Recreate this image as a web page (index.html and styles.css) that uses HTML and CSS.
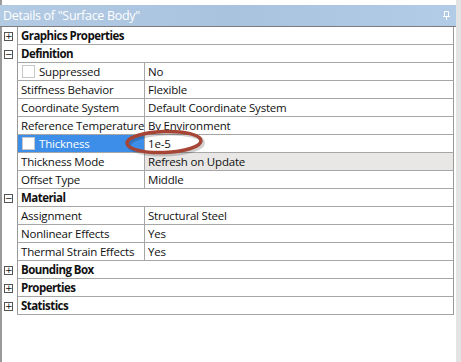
FILE: index.html
```html
<!DOCTYPE html>
<html lang="en">
<head>
  <meta charset="UTF-8">
  <title>Details of "Surface Body"</title>
  <link rel="stylesheet" href="styles.css">
</head>
<body>
<div class="panel">
  <!-- Title Bar -->
  <div class="title-bar">
    <span>Details of "Surface Body"</span>
    <svg class="pin" width="7" height="9" viewBox="0 0 7 9">
      <path d="M1.5 0.5h4v5h-4z M0 5.5h7 M3.5 5.5v3.5" fill="none" stroke="#fff" stroke-width="1"/>
    </svg>
  </div>

  <!-- Details Grid -->
  <div class="grid">
    <div class="row group"><div class="gutter"><span class="toggle">+</span></div><div class="cells">Graphics Properties</div></div>
    <div class="row group"><div class="gutter"><span class="toggle">&minus;</span></div><div class="cells">Definition</div></div>
    <div class="row"><div class="gutter"></div><div class="cells"><div class="name"><span class="check"></span>Suppressed</div><div class="value">No</div></div></div>
    <div class="row"><div class="gutter"></div><div class="cells"><div class="name">Stiffness Behavior</div><div class="value">Flexible</div></div></div>
    <div class="row"><div class="gutter"></div><div class="cells"><div class="name">Coordinate System</div><div class="value">Default Coordinate System</div></div></div>
    <div class="row"><div class="gutter"></div><div class="cells"><div class="name">Reference Temperature</div><div class="value">By Environment</div></div></div>
    <div class="row"><div class="gutter"></div><div class="cells"><div class="name selected"><span class="check"></span>Thickness</div><div class="value">1e-5</div></div></div>
    <div class="row"><div class="gutter"></div><div class="cells"><div class="name">Thickness Mode</div><div class="value readonly">Refresh on Update</div></div></div>
    <div class="row"><div class="gutter"></div><div class="cells"><div class="name">Offset Type</div><div class="value">Middle</div></div></div>
    <div class="row group"><div class="gutter"><span class="toggle">&minus;</span></div><div class="cells">Material</div></div>
    <div class="row"><div class="gutter"></div><div class="cells"><div class="name">Assignment</div><div class="value">Structural Steel</div></div></div>
    <div class="row"><div class="gutter"></div><div class="cells"><div class="name">Nonlinear Effects</div><div class="value">Yes</div></div></div>
    <div class="row"><div class="gutter"></div><div class="cells"><div class="name">Thermal Strain Effects</div><div class="value">Yes</div></div></div>
    <div class="row group"><div class="gutter"><span class="toggle">+</span></div><div class="cells">Bounding Box</div></div>
    <div class="row group"><div class="gutter"><span class="toggle">+</span></div><div class="cells">Properties</div></div>
    <div class="row group"><div class="gutter"><span class="toggle">+</span></div><div class="cells">Statistics</div></div>
  </div>

  <!-- Annotation -->
  <svg class="callout" width="90" height="34" viewBox="0 0 90 34">
    <ellipse cx="45" cy="17" rx="37" ry="10.5" fill="none" stroke="rgba(0,0,0,0.18)" stroke-width="4" transform="translate(2 2) rotate(-2 45 17)"/>
    <ellipse cx="45" cy="17" rx="37" ry="10.5" fill="none" stroke="#a64535" stroke-width="3.5" transform="rotate(-2 45 17)"/>
  </svg>
</div>
</body>
</html>
```

FILE: styles.css
```css
body {
  margin: 0;
  background-color: #fff;
  font-family: "Open Sans", "Noto Sans", sans-serif;
  font-size: 11.5px;
  letter-spacing: -0.2px;
  color: #111;
}

.panel {
  position: relative;
  height: 362px;
  padding-top: 5px;
  box-sizing: border-box;
  border-right: 5px solid #e4e4e4;
  border-left: 2px solid #9a9a9a;
  width: 461px;
}

/* Title Bar */
.title-bar {
  display: flex;
  justify-content: space-between;
  align-items: center;
  height: 21px;
  margin-left: -2px;
  padding: 0 6px 0 3px;
  background: linear-gradient(90deg, #b3cae3, #a9c3df 50%, #b2cbe6);
  color: #fff;
  font-size: 12.5px;
  letter-spacing: -0.3px;
  border-bottom: 1px solid #7d7d7d;
}

/* Grid */
.grid {
  width: 452px;
}
.row {
  display: flex;
  height: 18px;
}
.gutter {
  width: 13px;
  display: flex;
  align-items: center;
  padding-left: 2px;
}
.toggle {
  width: 7px;
  height: 7px;
  border: 1px solid #555;
  font-size: 9px;
  line-height: 7px;
  text-align: center;
  font-family: "DejaVu Sans", sans-serif;
  letter-spacing: 0;
  color: #111;
}
.cells {
  flex: 1;
  display: flex;
  border-left: 1px solid #999;
  border-right: 1px solid #999;
  border-bottom: 1px solid #a6a6a6;
  line-height: 18px;
}
.group .cells {
  font-weight: bold;
  letter-spacing: -0.55px;
  padding-left: 3px;
  padding-top: 1px;
  line-height: 16px;
}
.name {
  width: 123px;
  padding-left: 3px;
  border-right: 1px solid #a6a6a6;
  display: flex;
  align-items: center;
  white-space: nowrap;
  padding-top: 1px;
}
.value {
  flex: 1;
  padding-left: 3px;
  padding-top: 1px;
  line-height: 16px;
}
.readonly {
  background-color: #e8e7e5;
}
.selected {
  background-color: #3d8ee8;
  color: #fff;
}
.check {
  width: 11px;
  height: 11px;
  border: 1px solid #c8c8c8;
  background-color: #fff;
  margin: -1px 4px 0 1px;
}

/* Annotation */
.callout {
  position: absolute;
  left: 117px;
  top: 125px;
}
```
